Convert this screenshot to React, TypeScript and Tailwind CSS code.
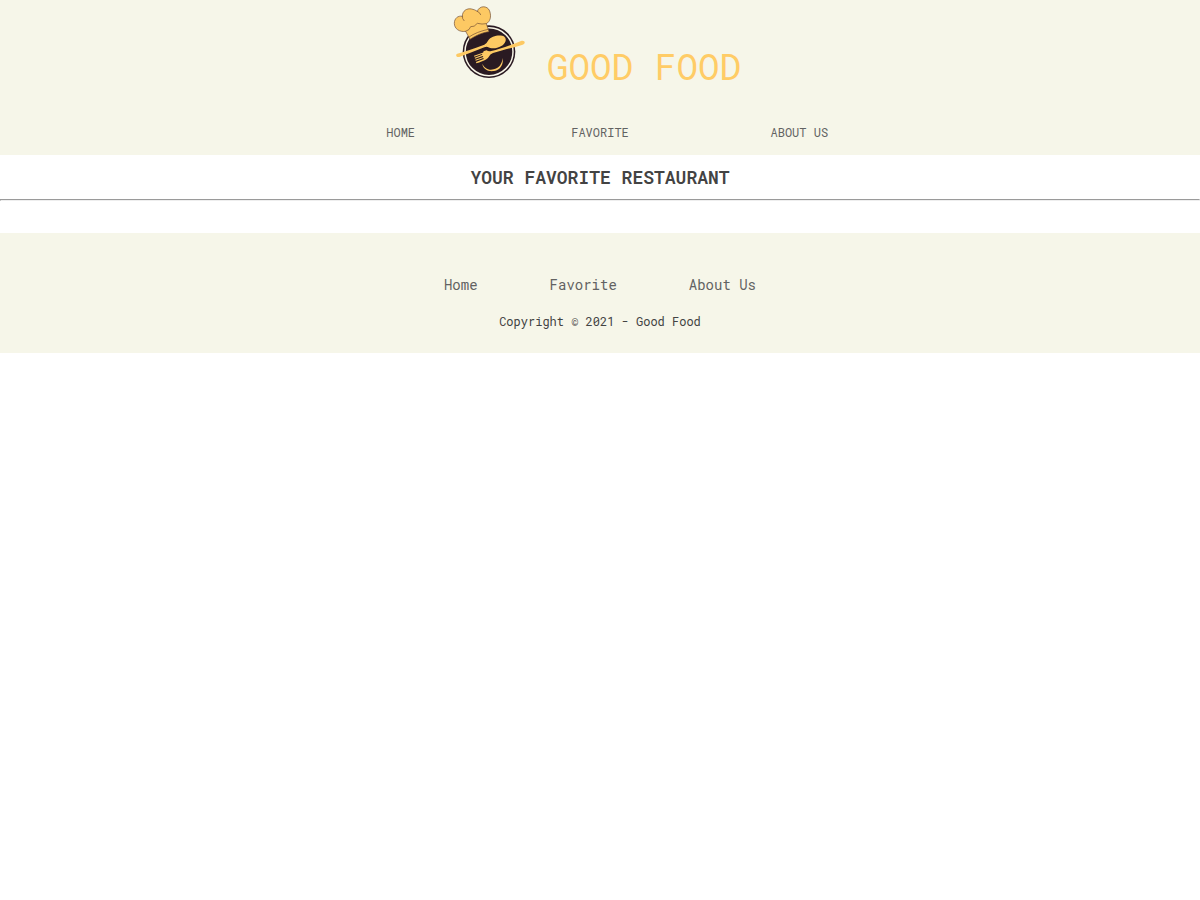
const links = [
  { label: "Home", href: "#home" },
  { label: "Favorite", href: "#favorite" },
  { label: "About Us", href: "#about" },
];

function Logo() {
  return (
    <svg viewBox="0 0 270 270" className="size-[90px] shrink-0" role="img" aria-label="Good Food logo">
      <circle cx="132" cy="155" r="79" fill="#2a1a22" />
      <circle cx="132" cy="155" r="72" fill="none" stroke="#f9f6e8" strokeWidth="4.5" />
      <path
        d="M75 118 L62 94 C43 97 28 86 28 70 C28 55 39 46 52 49 C52 32 66 24 80 27 Q90 29 97 34 C102 17 127 15 134 33 C140 51 135 65 124 71 L132 95 C112 97 92 107 75 118 Z"
        fill="#fdc963"
        stroke="#704b32"
        strokeWidth="2"
        strokeLinejoin="round"
      />
      <path
        d="M52 49 Q51 56 57 62 M97 34 Q105 37 107 44 M62 94 Q75 90 77 80 Q88 82 97 70 Q111 74 124 71 M72 111 Q95 95 130 88"
        fill="none"
        stroke="#704b32"
        strokeWidth="2"
        strokeLinecap="round"
      />
      <path
        d="M37 161 Q67 153 118 134 Q126 130 130 121 C138 108 166 103 178 110 C187 117 181 132 169 138 C155 146 139 147 128 141 Q124 139 118 142 Q73 160 43 171 C33 173 31 163 37 161 Z"
        fill="#fdc963"
      />
      <path
        d="M87 167 L113 158 Q117 156 115 154 L125 151 Q130 155 139 153 C165 147 201 134 228 123 C239 119 244 130 233 134 C204 143 176 149 144 159 Q135 162 131 171 C127 178 119 182 94 190 L93 186 L116 177 L115 174 L92 182 L91 179 L115 171 L113 168 L90 176 L89 173 L112 164 L111 162 L88 170 Z"
        fill="#fdc963"
      />
      <path
        d="M112 191 C113 205 128 216 147 213 C166 210 176 194 173 174 C171 193 161 205 146 208 C130 212 118 204 112 191 Z"
        fill="#fdc963"
      />
    </svg>
  );
}

export default function App() {
  return (
    <div className="bg-white font-['Roboto_Mono','Liberation_Mono',monospace] text-[#434343]">
      <header className="bg-[#f6f6e9] pb-3">
        <div className="flex items-end justify-center gap-3 pr-3.5">
          <Logo />
          <h1 className="text-4xl leading-[48px] text-[#ffcc66]">GOOD FOOD</h1>
        </div>
        <nav aria-label="Main" className="mx-auto mt-[31px] grid w-1/2 grid-cols-3 px-px">
          {links.map((link) => (
            <a key={link.label} href={link.href} className="text-center text-xs leading-[22px] text-[#626262] uppercase">
              {link.label}
            </a>
          ))}
        </nav>
      </header>

      <main className="pb-8">
        <h2 className="py-2.5 text-center text-lg leading-6 font-semibold uppercase">Your Favorite Restaurant</h2>
        <hr className="border border-t-[#9a9a9a] border-r-[#eeeeee] border-b-[#eeeeee] border-l-[#9a9a9a]" />
      </main>

      <footer className="bg-[#f6f6e9] px-4 pt-10 pb-[22px]">
        <nav aria-label="Footer" className="flex justify-center gap-[72px]">
          {links.map((link) => (
            <a key={link.label} href={link.href} className="text-sm leading-6 text-[#626262]">
              {link.label}
            </a>
          ))}
        </nav>
        <p className="mt-3.5 text-center text-xs leading-5">Copyright © 2021 - Good Food</p>
      </footer>
    </div>
  );
}
